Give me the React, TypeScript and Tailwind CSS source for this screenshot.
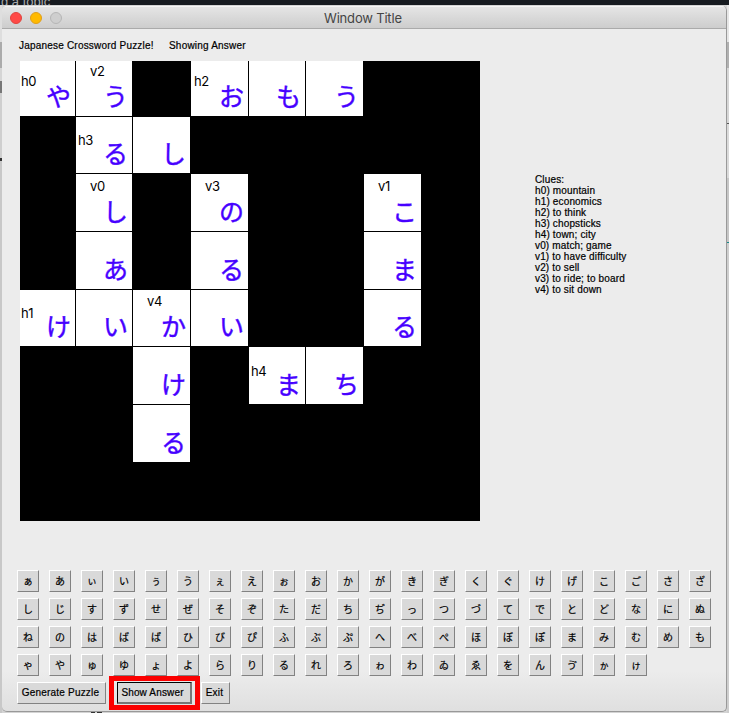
import React from "react";

type Cell = { kana: string; h?: string; v?: string; pos?: string };

const board: Record<string, Cell> = {
  "0-0": { kana: "や", h: "h0", pos: "mt-[12px] ml-px" },
  "0-1": { kana: "う", v: "v2", pos: "mt-[2px] ml-[14px]" },
  "0-3": { kana: "お", h: "h2", pos: "mt-[12px] ml-[3px]" },
  "0-4": { kana: "も" },
  "0-5": { kana: "う" },
  "1-1": { kana: "る", h: "h3", pos: "mt-[15px] ml-[2px]" },
  "1-2": { kana: "し" },
  "2-1": { kana: "し", v: "v0", pos: "mt-[4px] ml-[14px]" },
  "2-3": { kana: "の", v: "v3", pos: "mt-[4px] ml-[14px]" },
  "2-6": { kana: "こ", v: "v1", pos: "mt-[4px] ml-[14px]" },
  "3-1": { kana: "あ" },
  "3-3": { kana: "る" },
  "3-6": { kana: "ま" },
  "4-0": { kana: "け", h: "h1", pos: "mt-[15px] ml-px" },
  "4-1": { kana: "い" },
  "4-2": { kana: "か", v: "v4", pos: "mt-[3px] ml-[14px]" },
  "4-3": { kana: "い" },
  "4-6": { kana: "る" },
  "5-2": { kana: "け" },
  "5-4": { kana: "ま", h: "h4", pos: "mt-[16px] ml-[2px]" },
  "5-5": { kana: "ち" },
  "6-2": { kana: "る" },
};

const clues = [
  "Clues:",
  "h0) mountain",
  "h1) economics",
  "h2) to think",
  "h3) chopsticks",
  "h4) town; city",
  "v0) match; game",
  "v1) to have difficulty",
  "v2) to sell",
  "v3) to ride; to board",
  "v4) to sit down",
];

const keyRows = [
  "ぁあぃいぅうぇえぉおかがきぎくぐけげこごさざ",
  "しじすずせぜそぞただちぢっつづてでとどなにぬ",
  "ねのはばぱひびぴふぶぷへべぺほぼぽまみむめも",
  "ゃやゅゆょよらりるれろゎわゐゑをんゔゕゖ",
];

function BoardCell({ cell }: { cell?: Cell }) {
  if (!cell) return <div className="bg-black" />;
  const label = cell.h ?? cell.v;
  return (
    <div className="grid border-r border-b border-black bg-white">
      {label && (
        <span
          className={`col-start-1 row-start-1 h-4 self-start justify-self-start font-['Inter',sans-serif] text-[13px] leading-4 tracking-[-0.4px] text-black [font-kerning:none] ${cell.pos}`}
        >
          {label}
        </span>
      )}
      <span className="col-start-1 row-start-1 mr-[4px] mb-[6px] self-end justify-self-end font-['Noto_Sans_CJK_JP',sans-serif] text-[25px] leading-[30px] text-[#4600ff] [-webkit-text-stroke:0.4px_#4600ff]">
        {cell.kana}
      </span>
    </div>
  );
}

const raised =
  "flex h-[22px] items-center justify-center border-t border-l border-r border-b border-t-white border-l-white border-r-[#828282] border-b-[#828282] bg-[#d9d9d9] text-black";

export default function App() {
  const cells = [];
  for (let r = 0; r < 8; r++)
    for (let c = 0; c < 8; c++) cells.push(<BoardCell key={`${r}-${c}`} cell={board[`${r}-${c}`]} />);

  return (
    <div className="relative h-[713px] w-[729px] overflow-hidden bg-[#d4d4d4] font-['Liberation_Sans',Arial,sans-serif]">
      <div className="h-[5px] overflow-hidden bg-[#171b20] whitespace-nowrap">
        <div className="-mt-[6px] pl-px text-[13px] leading-4 text-[#a9abad]">d a topic</div>
      </div>
      <div className="flex h-[708px]">
        <div className="flex w-[2px] shrink-0 flex-col">
          <div className="h-[37px] bg-[#dedede]" />
          <div className="h-[26px] bg-[#ababab]" />
          <div className="h-[13px] bg-[#d5d5d5]" />
          <div className="h-[12px] bg-[#777]" />
          <div className="h-[65px] bg-[#cfcfcf]" />
          <div className="h-[3px] bg-[#333]" />
          <div className="grow bg-[#c8c8c8]" />
        </div>
        <div className="mt-px flex h-[706px] w-[725px] shrink-0 flex-col overflow-hidden rounded-[5px] border-r border-b border-[#999] bg-[linear-gradient(to_bottom,#ececec_0,#ececec_665px,#dfdfdf_706px)]">
          <div className="flex h-[23px] shrink-0 items-center border-t border-b border-t-[#f5f5f5] border-b-[#aaa] bg-linear-to-b from-[#e5e5e5] to-[#cdcdcd]">
            <div className="ml-[8px] flex w-[120px] gap-[8px]">
              <div className="size-3 rounded-full border border-[#e0443e] bg-[#ff4a47]" />
              <div className="size-3 rounded-full border border-[#e09e1a] bg-[#ffba00]" />
              <div className="size-3 rounded-full border border-[#b6b6b6] bg-[#cecece]" />
            </div>
            <div className="ml-[194px] pt-[2px] font-['Inter',sans-serif] text-[13px] tracking-[-0.18px] whitespace-nowrap text-[#444]">
              Window Title
            </div>
          </div>
          <div className="flex h-[32px] shrink-0 items-center pl-[17px] text-[10px] tracking-[0.2px] whitespace-nowrap text-black [-webkit-text-stroke:0.2px_black]">
            <span className="w-[150px]">Japanese Crossword Puzzle!</span>
            <span>Showing Answer</span>
          </div>
          <div className="flex h-[460px] shrink-0 pl-[18px]">
            <div className="grid w-[460px] shrink-0 grid-cols-[56px_57px_58px_58px_57px_58px_58px_58px] grid-rows-[56px_57px_58px_58px_57px_58px_58px_58px] bg-black">
              {cells}
            </div>
            <div className="ml-[55px] pt-[113px] text-[10px] leading-[11px] tracking-[0.15px] whitespace-nowrap text-black [-webkit-text-stroke:0.2px_black]">
              {clues.map((c) => (
                <div key={c}>{c}</div>
              ))}
            </div>
          </div>
          <div className="mt-[49px] flex shrink-0 flex-col gap-[6px] pl-[15px]">
            {keyRows.map((row) => (
              <div key={row} className="flex gap-[10px]">
                {[...row].map((k) => (
                  <button
                    key={k}
                    className={`${raised} w-[22px] shrink-0 pb-px font-['Noto_Sans_CJK_JP',sans-serif] text-[10px] leading-[19px] [-webkit-text-stroke:0.2px_black]`}
                  >
                    {k}
                  </button>
                ))}
              </div>
            ))}
          </div>
          <div className="flex h-[33px] shrink-0 items-center pl-[15px] text-[10px] tracking-[0.2px] whitespace-nowrap [-webkit-text-stroke:0.2px_black]">
            <button className={`${raised} w-[89px] pr-[2px] pb-px`}>Generate Puzzle</button>
            <div className="ml-[3px] flex h-[34px] w-[91px] items-center justify-center border-[5px] border-[#fb0000]">
              <button className="flex h-[22px] w-[75px] items-center justify-center border-2 border-t border-l border-t-black border-l-black border-r-[#777] border-b-[#777] bg-[#d9d9d9] pt-px pr-[3px] tracking-[0.15px]">
                Show Answer
              </button>
            </div>
            <button className={`${raised} ml-px w-[29px] pr-[2px] pb-px`}>Exit</button>
          </div>
        </div>
        <div className="flex w-[2px] shrink-0 flex-col">
          <div className="h-[37px] bg-[#e6e6e6]" />
          <div className="h-[26px] bg-[#b0b0b0]" />
          <div className="h-[55px] bg-[#d6d6d6]" />
          <div className="h-px bg-[#555]" />
          <div className="h-[54px] bg-[#dadada]" />
          <div className="h-[64px] bg-[#c6c6c6]" />
          <div className="h-px bg-[#178a8a]" />
          <div className="grow bg-[#cecece]" />
        </div>
      </div>
      <div className="absolute bottom-0 left-[91px] flex gap-[2px]">
        <div className="h-px w-[4px] bg-[#333]" />
        <div className="h-px w-[5px] bg-[#333]" />
      </div>
    </div>
  );
}
